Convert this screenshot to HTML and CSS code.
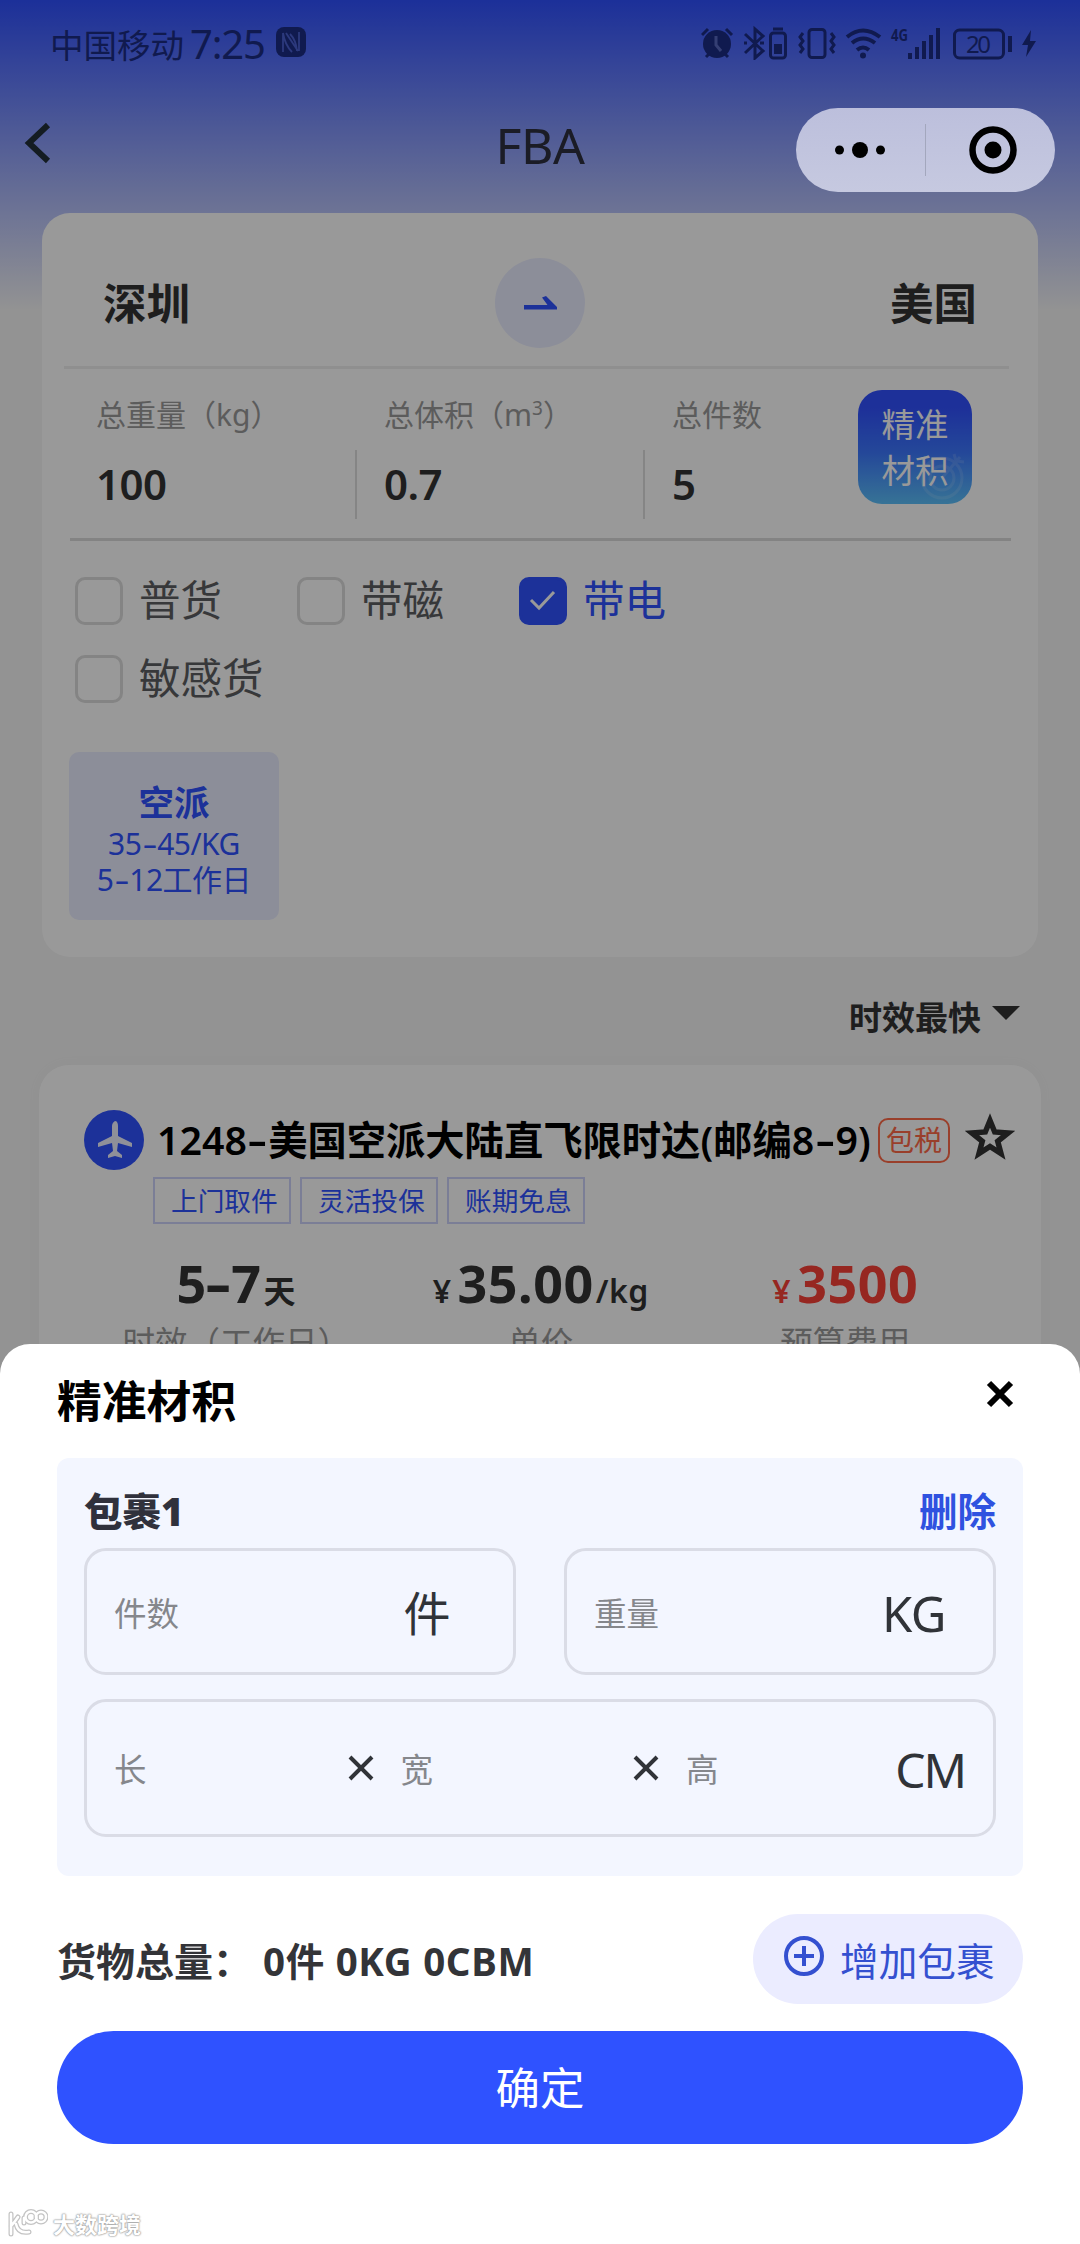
FILE: index.html
```html
<!DOCTYPE html>
<html lang="zh-CN">
<head>
<meta charset="utf-8">
<title>FBA</title>
<link rel="stylesheet" href="styles.css">
</head>
<body>
<main class="page">
  <header class="status">
    <span class="carrier">中国移动</span>
    <span class="clock">7:25</span>
    <svg class="nfc" width="30" height="30" viewBox="0 0 30 30">
      <rect width="30" height="30" rx="8" fill="currentColor"/>
      <path d="M7 25V6M7 6q2 12 9 19M10 6l12 18M14 7q6 6 7 17M23 24V5" fill="none" stroke="#4a5fd0" stroke-width="1.800"/>
    </svg>
    <svg class="status-icons" width="336" height="38" viewBox="701 21 336 38" fill="none" stroke="currentColor" stroke-width="3">
      <circle cx="717" cy="43" r="14" fill="currentColor" stroke="none"/>
      <path d="M702 34l6-6M732 34l-6-6M706 56l4-4M728 56l-4-4"/>
      <path d="M716 35v9l5 6" stroke="#5868c0"/>
      <path d="M745 33l18 17-8 7V28l8 7-18 17M744 42h3M760 42h4"/>
      <rect x="770.500" y="32" width="15" height="25" rx="3"/>
      <path d="M773 28h10"/>
      <rect x="774" y="43" width="8" height="10" fill="currentColor" stroke="none"/>
      <rect x="809" y="28.500" width="16" height="28" rx="3"/>
      <path d="M803 32l-3 4 3 4-3 4 3 4-3 4M831 32l3 4-3 4 3 4-3 4 3 4"/>
      <path d="M847 36q16-13 33 0M852 42q11-9 23 0M857 49q6-5 12 0" stroke-width="4"/>
      <circle cx="863" cy="54.500" r="3" fill="currentColor" stroke="none"/>
      <text class="net" x="891" y="40" textLength="17" lengthAdjust="spacingAndGlyphs">4G</text>
      <path d="M910 58v-6M917 58V46M924 58V40M931 58V34M938 58V27" stroke-width="4"/>
      <rect x="954.500" y="29" width="49" height="28" rx="5"/>
      <path d="M1010 35v16" stroke-width="4"/>
      <text class="level" x="966" y="52" textLength="25">20</text>
      <path d="M1031 29l-9 15h6l-2 12 10-16h-6z" fill="currentColor" stroke="none"/>
    </svg>
  </header>

  <nav class="nav">
    <svg class="back" width="30" height="42" viewBox="0 0 30 42"><path d="M24 3L5 21l19 18" fill="none" stroke="currentColor" stroke-width="6"/></svg>
    <h1 class="nav-title">FBA</h1>
  </nav>

  <section class="card quote">
    <div class="route">
      <span>深圳</span>
      <div class="swap"><svg width="33" height="14" viewBox="0 0 33 14"><path d="M0 9h23.500L18 1.500l4-1.500 11 11v2.500H0z" fill="#2f52ff"/></svg></div>
      <span>美国</span>
    </div>
    <div class="cargo">
      <div class="field"><span class="label">总重量（kg）</span><b class="value">100</b></div>
      <div class="field"><span class="label">总体积（m<sup>3</sup>）</span><b class="value">0.7</b></div>
      <div class="field"><span class="label">总件数</span><b class="value">5</b></div>
      <button class="precise">精准<br>材积
        <svg class="precise-mark" width="46" height="50" viewBox="0 0 46 50" fill="none" stroke="#fff" stroke-width="3"><circle cx="22" cy="27" r="20"/><circle cx="22" cy="27" r="12"/><path d="M22 27L40 6M34 3l2 7 8 1"/></svg>
      </button>
    </div>
    <div class="kinds">
      <label class="kind"><i class="box"></i><span>普货</span></label>
      <label class="kind"><i class="box"></i><span>带磁</span></label>
      <label class="kind on"><i class="box"><svg width="28" height="22" viewBox="0 0 28 22"><path d="M2 10l8 8L25 2" fill="none" stroke="#fff" stroke-width="3"/></svg></i><span>带电</span></label>
      <label class="kind"><i class="box"></i><span>敏感货</span></label>
    </div>
    <div class="channel"><b>空派</b><span>35<i class="dash">-</i>45/KG</span><span>5<i class="dash">-</i>12工作日</span></div>
  </section>

  <div class="sort">时效最快<svg width="28" height="14" viewBox="0 0 28 14"><path d="M0 0h28L14 14z" fill="currentColor"/></svg></div>

  <section class="card offer">
    <div class="offer-head">
      <svg class="plane" width="60" height="60" viewBox="0 0 60 60"><circle cx="30" cy="30" r="30" fill="#2f52ff"/><path d="M31 11c2 0 3 2 3 5v10l14 7v4l-14-4-1 8 5 4v3l-7-2-7 2v-3l5-4-1-8-14 4v-4l14-7V16c0-3 2-5 4-5z" fill="#eef1ff"/></svg>
      <h2 class="offer-title">1248<i class="dash">-</i>美国空派大陆直飞限时达(邮编8<i class="dash">-</i>9)</h2>
      <span class="tax">包税</span>
      <svg class="star" width="50" height="48" viewBox="0 0 50 48"><path d="M25 7.500l4.700 11.500 13.300 1-10.300 8.300 3.300 12.200-11-7-11 7 3.300-12.200L7 20l13.300-1z" fill="none" stroke="currentColor" stroke-width="5.500"/></svg>
    </div>
    <div class="tags"><span>上门取件</span><span>灵活投保</span><span>账期免息</span></div>
    <div class="metrics">
      <div class="metric"><b>5<i class="dash">-</i>7<small>天</small></b><span>时效（工作日）</span></div>
      <div class="metric"><b><small class="yen">¥</small>35.00<small>/kg</small></b><span>单价</span></div>
      <div class="metric total"><b><small class="yen">¥</small>3500</b><span>预算费用</span></div>
    </div>
  </section>
</main>

<div class="capsule">
  <svg width="259" height="84" viewBox="0 0 259 84"><path d="M129.500 16v52" stroke="#a3a7bd"/><circle cx="43.500" cy="42" r="4.500"/><circle cx="64" cy="42" r="8"/><circle cx="84.500" cy="42" r="4.500"/><circle cx="197" cy="42" r="20.500" fill="none" stroke="#000" stroke-width="6.500"/><circle cx="197" cy="42" r="8.500"/></svg>
</div>

<section class="sheet">
  <header class="sheet-head">
    <h2>精准材积</h2>
    <svg width="28" height="28" viewBox="0 0 28 28"><path d="M3 3l22 22M25 3L3 25" stroke="#000" stroke-width="6"/></svg>
  </header>
  <div class="package">
    <div class="package-head"><b>包裹1</b><a>删除</a></div>
    <div class="pair">
      <div class="input"><span>件数</span><em>件</em></div>
      <div class="input"><span>重量</span><em>KG</em></div>
    </div>
    <div class="input dims">
      <span>长</span>
      <svg width="26" height="26" viewBox="0 0 26 26"><path d="M2 2l22 22M24 2L2 24" stroke="#303338" stroke-width="4"/></svg>
      <span>宽</span>
      <svg width="26" height="26" viewBox="0 0 26 26"><path d="M2 2l22 22M24 2L2 24" stroke="#303338" stroke-width="4"/></svg>
      <span>高</span>
      <em>CM</em>
    </div>
  </div>
  <div class="summary">
    <b class="summary-label">货物总量：</b><b class="summary-value">0件 0KG 0CBM</b>
    <button class="add"><svg width="40" height="40" viewBox="0 0 40 40" fill="none" stroke="currentColor" stroke-width="4"><circle cx="20" cy="20" r="18"/><path d="M10 20h20M20 10v20"/></svg>增加包裹</button>
  </div>
  <button class="confirm">确定</button>
  <footer class="mark">
    <svg width="40" height="28" viewBox="0 0 40 28" fill="none" stroke-linecap="round">
      <g stroke="#c4c4c4" stroke-width="5"><path d="M3 5v20M3 17q3-3 7-9M8 15q2 10 13 8"/><circle cx="23" cy="8" r="5.500"/><circle cx="33" cy="8" r="5"/><path d="M16 9v5"/></g>
      <g stroke="#fff" stroke-width="2.500"><path d="M3 5v20M3 17q3-3 7-9M8 15q2 10 13 8"/><circle cx="23" cy="8" r="5.500"/><circle cx="33" cy="8" r="5"/><path d="M16 9v5"/></g>
    </svg>
    <span>大数跨境</span>
  </footer>
</section>
</body>
</html>
```
FILE: styles.css
```css
* { box-sizing: border-box; }
body {
  margin: 0;
  position: relative;
  width: 1080px;
  height: 2244px;
  overflow: hidden;
  background: #fff;
  font-family: "Noto Sans", "Noto Sans CJK SC", sans-serif;
  color: #333;
}
h1, h2 { margin: 0; font-weight: 400; }
button { border: 0; padding: 0; font-family: inherit; }
svg { display: block; flex: none; }
i, em { font-style: normal; }

/* wide hyphen used in number ranges */
.dash { display: inline-block; margin: 0 .11em; transform: scaleX(1.55); }

/* dimmed page behind the sheet */
.page {
  position: relative;
  height: 1380px;
  overflow: hidden;
  background: #f5f5f5 linear-gradient(#2f50ff, #f5f5f5) no-repeat 0 0 / 100% 310px;
}
.page::after {
  content: "";
  position: absolute;
  inset: 0;
  background: rgba(0, 0, 0, .4);
}

.status {
  display: flex;
  align-items: center;
  height: 90px;
  padding: 0 43px 0 50px;
  color: #1c2c84;
}
.carrier { margin-top: -4px; font-size: 33.500px; }
.clock { margin: -3px 0 0 6px; font-size: 40px; letter-spacing: -1.2px; }
.nfc { margin: -6px 0 0 11px; }
.status-icons { margin: -8px 0 0 auto; }
.status-icons text { fill: currentColor; stroke: none; }
.net { font-size: 16px; font-weight: 700; }
.level { font-size: 24px; }

.nav {
  position: relative;
  display: flex;
  align-items: center;
  height: 123px;
  padding: 0 24px;
  color: #2e3040;
}
.back { margin-top: -18px; color: #22303a; }
.nav-title { flex: 1; margin: -14px 30px 0 0; text-align: center; font-size: 50px; letter-spacing: -.5px; }

.card { background: #fff; }
.quote { height: 744px; margin: 0 42px; border-radius: 28px; }

.route {
  display: flex;
  justify-content: space-between;
  align-items: center;
  height: 156px;
  margin: 0 29px 0 22px;
  padding: 26px 32px 0 39px;
  border-bottom: 3px solid #eeeeee;
  font-size: 43.500px;
  font-weight: 700;
}
.route span { margin-top: -2px; }
.swap {
  display: flex;
  align-items: center;
  justify-content: center;
  width: 90px;
  height: 90px;
  border-radius: 50%;
  background: #eaedff;
}

.cargo {
  display: grid;
  grid-template-columns: 288px 288px 212px 114px;
  height: 172px;
  margin: 0 27px 0 28px;
  border-bottom: 3px solid #dadada;
}
.field { position: relative; display: flex; flex-direction: column; padding-left: 26px; }
.field + .field { margin-left: -1px; padding-left: 27px; }
.field:nth-child(-n+2)::after {
  content: "";
  position: absolute;
  right: 1px;
  top: 81px;
  width: 2px;
  height: 69px;
  background: #dedede;
}
.label { height: 44px; margin-top: 24px; line-height: 44px; font-size: 30px; color: #999; white-space: nowrap; }
.label sup { font-size: 19px; line-height: 0; }
.value { margin-top: 17px; line-height: 60px; font-size: 42px; font-weight: 600; letter-spacing: -.5px; }
.precise {
  position: relative;
  width: 114px;
  height: 114px;
  margin-top: 21px;
  border-radius: 24px;
  background: linear-gradient(#3150ff 15%, #3d78ff 55%, #5cc0fa);
  color: #fff;
  font-size: 33.500px;
  line-height: 46px;
}
.precise-mark { position: absolute; right: 6px; bottom: 3px; opacity: .12; }

.kinds { display: grid; grid-template-columns: 222px 222px 222px; gap: 30px 0; margin: 36px 0 0 33px; }
.kind { display: flex; align-items: center; gap: 16px; height: 48px; font-size: 41.500px; line-height: 48px; color: #5c5e62; white-space: nowrap; }
.kind.on { color: #2f52ff; }
.kind span { margin-top: -2px; }
.box { display: flex; align-items: center; justify-content: center; width: 48px; height: 48px; border: 3px solid #dcdcdc; border-radius: 10px; }
.on .box { border-color: #2f52ff; background: #2f52ff; }

.channel {
  display: flex;
  flex-direction: column;
  align-items: center;
  width: 210px;
  height: 168px;
  margin: 49px 0 0 27px;
  padding-top: 26px;
  border-radius: 10px;
  background: #eaedff;
  color: #2f52ff;
  font-size: 30px;
  line-height: 36px;
  letter-spacing: -.5px;
}
.channel b { font-size: 35.500px; line-height: 48px; letter-spacing: 0; }

.sort {
  display: flex;
  justify-content: flex-end;
  align-items: center;
  gap: 11px;
  height: 108px;
  padding: 10px 60px 0 0;
  font-size: 33px;
  font-weight: 600;
}
.sort svg { margin-top: -6px; }

.offer { height: 400px; margin: 0 39px; padding: 45px 26px 0 45px; border-radius: 30px; box-shadow: 0 0 12px #f0f0f0; }
.offer-head { display: flex; align-items: center; height: 60px; }
.offer-title { width: 720px; margin-left: 13px; font-size: 39.300px; line-height: 60px; font-weight: 600; color: #000; white-space: nowrap; }
.tax { width: 72px; height: 45px; margin-left: 1px; border: 2px solid #ff6a48; border-radius: 10px; text-align: center; font-size: 28px; line-height: 41px; color: #ff6a48; }
.star { margin: -6px 0 0 15px; }
.tags { display: flex; gap: 9px; margin: 7px 0 0 69px; }
.tags span { width: 138px; height: 47px; padding-left: 16px; border: 2px solid #cdd3fa; font-size: 26.700px; line-height: 43px; color: #2f52ff; white-space: nowrap; }
.metrics { display: grid; grid-template-columns: repeat(3, 304.500px); margin-top: 22px; }
.metric { display: flex; flex-direction: column; align-items: center; color: #999; font-size: 32.500px; line-height: 46px; white-space: nowrap; }
.metric b { height: 74px; line-height: 74px; font-size: 52px; color: #333; letter-spacing: .5px; }
.metric b .dash { margin: 0 .07em; }
.metric small { margin-left: 2px; font-size: 32px; font-weight: 600; }
.metric .yen { margin: 0 6px 0 0; }
.total b { color: #fb4238; }

/* mini-program menu floating above the dim layer */
.capsule {
  position: absolute;
  z-index: 2;
  left: 796px;
  top: 108px;
  border-radius: 42px;
  background: linear-gradient(#bcbfdc, #c6c9e0);
}

.sheet { position: relative; height: 900px; margin-top: -36px; padding: 0 57px; border-radius: 30px 30px 0 0; background: #fff; }
.sheet-head { display: flex; justify-content: space-between; height: 114px; padding-right: 9px; }
.sheet-head h2 { height: 114px; line-height: 113px; font-size: 44.800px; font-weight: 600; color: #000; }
.sheet-head svg { margin-top: 36px; }
.package { height: 418px; padding: 23px 27px 0; border-radius: 12px; background: #f3f6ff; }
.package-head { display: flex; justify-content: space-between; height: 67px; line-height: 60px; font-size: 38.500px; font-weight: 700; color: #30313c; }
.package-head a { color: #2f52e0; }
.pair { display: grid; grid-template-columns: 432px 432px; justify-content: space-between; }
.input { display: flex; align-items: center; height: 127px; padding-left: 27px; border: 3px solid #dadce6; border-radius: 22px; font-size: 32.500px; color: #85878c; }
.input em { margin-left: auto; margin-right: 47px; padding-top: 2px; font-size: 49px; line-height: 60px; letter-spacing: -.5px; color: #303338; }
.pair .input:first-child em { margin-right: 63px; font-size: 47px; }
.dims { height: 138px; margin-top: 24px; }
.dims svg { margin-left: 201px; margin-right: 27px; }
.dims span + svg ~ span + svg { margin-left: 200px; margin-right: 27px; }
.dims em { margin-right: 28px; padding-top: 4px; font-size: 48px; letter-spacing: -2px; }

.summary { display: flex; align-items: center; height: 90px; margin-top: 38px; font-size: 39px; color: #333438; white-space: nowrap; }
.summary-label { width: 206px; }
.summary-value { font-size: 38.500px; letter-spacing: .7px; }
.add { display: flex; align-items: center; gap: 16px; width: 270px; height: 90px; margin-left: auto; padding-left: 31px; border-radius: 45px; background: #ebecff; font-size: 38.700px; color: #3450d0; }
.add svg { margin-top: -6px; }
.confirm { display: block; width: 966px; height: 113px; margin-top: 27px; padding-bottom: 4px; border-radius: 57px; background: #2f52ff; color: #fff; font-size: 44.500px; }
.mark { display: flex; align-items: center; gap: 5px; height: 32px; margin: 63px 0 0 -49px; font-size: 22px; font-weight: 700; color: #fff; }
.mark span { text-shadow: 0 0 2px #999, 0 0 2px #aaa, 0 0 1px #999; }
```
